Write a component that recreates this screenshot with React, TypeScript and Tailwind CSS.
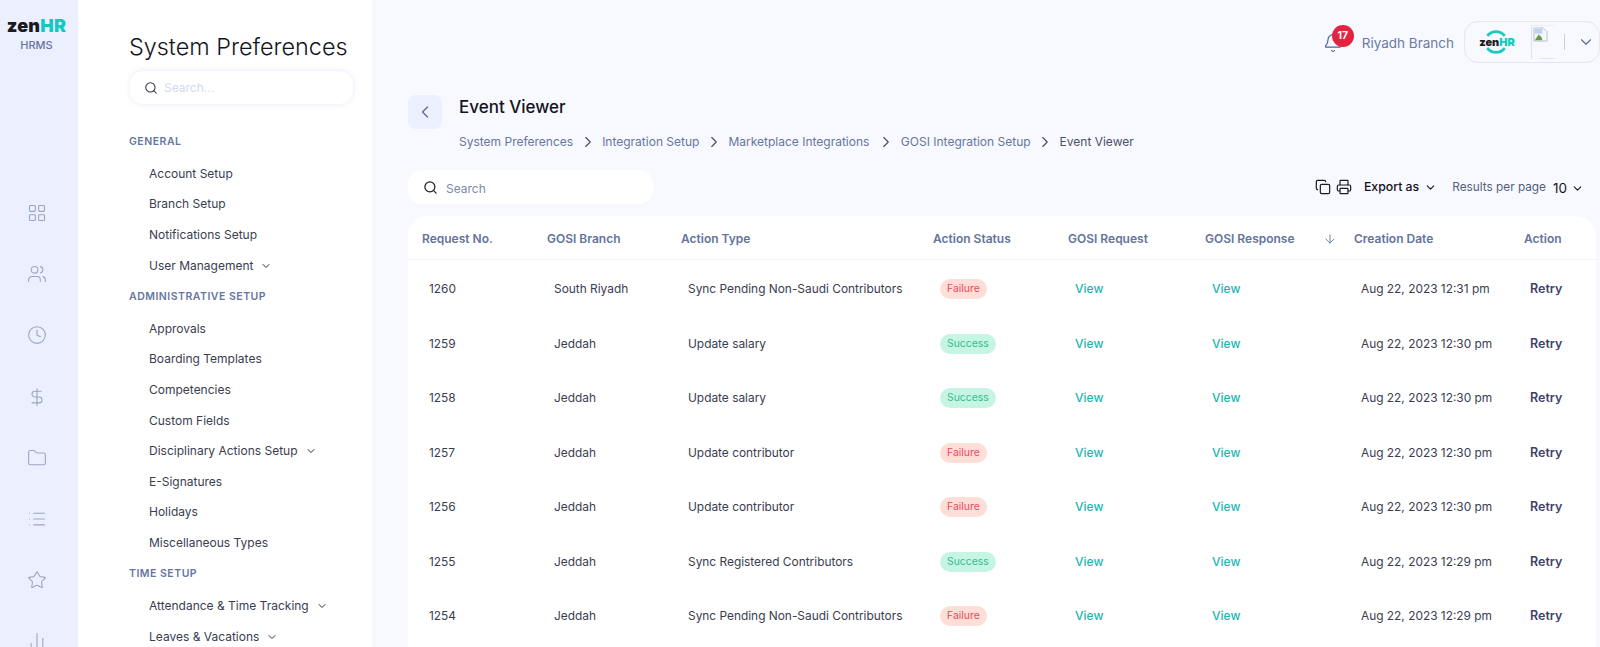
import { BarChart2, Bell, ChevronDown, ChevronLeft, ChevronRight, Clock, Copy, DollarSign, Folder, LayoutGrid, List, Printer, ArrowDown, Search, Star, Users } from "lucide-react";

const railIcons = [LayoutGrid, Users, Clock, DollarSign, Folder, List, Star, BarChart2];

const menu = [
  { title: "GENERAL", items: [["Account Setup"], ["Branch Setup"], ["Notifications Setup"], ["User Management", true]] },
  {
    title: "ADMINISTRATIVE SETUP",
    items: [
      ["Approvals"],
      ["Boarding Templates"],
      ["Competencies"],
      ["Custom Fields"],
      ["Disciplinary Actions Setup", true],
      ["E-Signatures"],
      ["Holidays"],
      ["Miscellaneous Types"],
    ],
  },
  { title: "TIME SETUP", items: [["Attendance & Time Tracking", true], ["Leaves & Vacations", true]] },
] as { title: string; items: [string, boolean?][] }[];

const crumbs = ["System Preferences", "Integration Setup", "Marketplace Integrations", "GOSI Integration Setup", "Event Viewer"];

const rows = [
  { no: 1260, branch: "South Riyadh", type: "Sync Pending Non-Saudi Contributors", ok: false, date: "Aug 22, 2023 12:31 pm" },
  { no: 1259, branch: "Jeddah", type: "Update salary", ok: true, date: "Aug 22, 2023 12:30 pm" },
  { no: 1258, branch: "Jeddah", type: "Update salary", ok: true, date: "Aug 22, 2023 12:30 pm" },
  { no: 1257, branch: "Jeddah", type: "Update contributor", ok: false, date: "Aug 22, 2023 12:30 pm" },
  { no: 1256, branch: "Jeddah", type: "Update contributor", ok: false, date: "Aug 22, 2023 12:30 pm" },
  { no: 1255, branch: "Jeddah", type: "Sync Registered Contributors", ok: true, date: "Aug 22, 2023 12:29 pm" },
  { no: 1254, branch: "Jeddah", type: "Sync Pending Non-Saudi Contributors", ok: false, date: "Aug 22, 2023 12:29 pm" },
];

const cols = "grid grid-cols-[125px_134px_252px_135px_137px_149px_170px_1fr] items-center pl-[14px]";

function Rail() {
  return (
    <aside className="w-[78px] shrink-0 bg-[#ecf0fe] pr-[5px] flex flex-col items-center">
      <div className="mt-[14px] text-[18px] leading-[24px] font-black tracking-[0.2px] text-[#1b1b1f]">
        zen<span className="text-[#14c9c0]">HR</span>
      </div>
      <div className="text-[11px] leading-[14px] font-medium text-[#66769f]">HRMS</div>
      <div className="mt-[151px] flex flex-col gap-[41.2px]">
        {railIcons.map((Icon, i) => (
          <Icon key={i} size={20} strokeWidth={1.3} className="text-[#98a5c5]" />
        ))}
      </div>
    </aside>
  );
}

function Sidebar() {
  return (
    <aside className="w-[294px] shrink-0 bg-white pl-[51px] pr-[18px]">
      <h1 className="mt-[29px] text-[23.4px] leading-[36px] font-light text-[#14141c] whitespace-nowrap">System Preferences</h1>
      <div className="mt-[5px] h-[35px] w-[225px] rounded-[14px] border border-[#f3f5fc] shadow-[0_0_4px_rgba(220,226,245,0.5)] flex items-center pl-[14px] gap-[6px]">
        <Search size={14} strokeWidth={1.8} className="text-[#33363f]" />
        <span className="text-[12px] text-[#d3daeb]">Search...</span>
      </div>
      <div className="mt-[21px]">
        {menu.map((group) => (
          <div key={group.title}>
            <div className="h-[31px] mb-[1.6px] flex items-center text-[10.5px] font-semibold tracking-[0.5px] text-[#66769f]">{group.title}</div>
            {group.items.map(([label, sub]) => (
              <div key={label} className="h-[30.6px] pl-[20px] flex items-center gap-[7px] text-[12px] text-[#3a3d50]">
                {label}
                {sub && <ChevronDown size={12} strokeWidth={2} className="text-[#2a2d40]" />}
              </div>
            ))}
          </div>
        ))}
      </div>
    </aside>
  );
}

function AccountBox() {
  return (
    <div className="h-[42px] w-[136px] rounded-[14px] border border-[#e2e6f5] flex items-center">
      <div className="relative ml-[12px] w-[40px] h-[30px] flex items-center justify-center">
        <svg viewBox="0 0 30 30" className="absolute left-[6px] top-[2px] w-[26px] h-[26px]" fill="none" stroke="#1ec9c0" strokeWidth="3.4">
          <path d="M5 8 A12.5 12.5 0 0 1 25 8" />
          <path d="M25 22 A12.5 12.5 0 0 1 5 22" />
        </svg>
        <span className="relative text-[11px] font-black text-[#1b1b1f] whitespace-nowrap">
          zen<span className="text-[#14c9c0]">HR</span>
        </span>
      </div>
      {/* broken avatar image */}
      <div className="ml-[14px] w-[33px] h-[34px] border-l border-[#dfe2ea] relative">
        <div className="absolute left-0 top-0 w-[23px] border-t border-[#eceef3]" />
        <div className="absolute left-[8px] bottom-0 w-[15px] border-b border-[#e2e4ea]" />
        <svg viewBox="0 0 16 16" className="absolute left-[1px] top-[2px] w-[15px] h-[15px]">
          <path d="M1 1h10l4 4v10H1z" fill="#f4f6fb" stroke="#b9bfcc" strokeWidth="1" />
          <path d="M2 14l4-6 3 3 1 3z" fill="#5f9e45" />
          <path d="M2 2h8v5H2z" fill="#bcd3f3" />
        </svg>
      </div>
      <div className="h-[16px] border-l border-[#c9cfdc]" />
      <ChevronDown size={18} strokeWidth={1.5} className="ml-[12px] text-[#5a6a92]" />
    </div>
  );
}

function Table() {
  return (
    <div className="mt-[12px] mr-[4px] pb-[20px] rounded-t-[20px] bg-white">
      <div className={`${cols} h-[44px] pt-[3px] border-b border-[#f2f4fb] text-[12px] font-semibold text-[#64739b]`}>
        <div>Request No.</div>
        <div>GOSI Branch</div>
        <div>Action Type</div>
        <div>Action Status</div>
        <div>GOSI Request</div>
        <div className="flex items-center">
          GOSI Response
          <ArrowDown size={14} strokeWidth={1.5} className="ml-[28px]" />
        </div>
        <div>Creation Date</div>
        <div>Action</div>
      </div>
      <div className="pt-[2px]">
        {rows.map((r) => (
          <div key={r.no} className={`${cols} h-[54.5px] text-[11.9px] text-[#3a3d50]`}>
            <div className="pl-[7px]">{r.no}</div>
            <div className="pl-[7px]">{r.branch}</div>
            <div className="pl-[7px] whitespace-nowrap">{r.type}</div>
            <div className="pl-[7px]">
              {r.ok ? (
                <span className="inline-flex h-[20px] items-center rounded-full bg-[#c7f5e4] px-[7px] text-[10.4px] text-[#33bd8d]">Success</span>
              ) : (
                <span className="inline-flex h-[20px] items-center rounded-full bg-[#ffded7] px-[7px] text-[10.4px] text-[#e8495f]">Failure</span>
              )}
            </div>
            <div className="pl-[7px] text-[12px] font-medium text-[#1db6b2]">View</div>
            <div className="pl-[7px] text-[12px] font-medium text-[#1db6b2]">View</div>
            <div className="pl-[7px] whitespace-nowrap">{r.date}</div>
            <div className="pl-[6px] text-[12.5px] font-semibold leading-[16px] text-[#3f4169]">Retry</div>
          </div>
        ))}
      </div>
    </div>
  );
}

function Main() {
  return (
    <main className="flex-1 min-w-0 pl-[36px]">
      <div className="h-[84px] pt-[21px] flex items-start justify-end">
        <div className="h-[42px] flex items-center">
          <div className="relative mr-[19px] mt-[2px]">
            <Bell size={20} strokeWidth={1.4} className="text-[#4a6296]" />
            <span className="absolute left-[9px] top-[-8px] w-[22px] h-[22px] rounded-full bg-[#e3233f] text-white text-[10.5px] font-bold flex items-center justify-center">17</span>
          </div>
          <span className="mr-[10px] mt-[2px] text-[13.5px] text-[#6b7ba3]">Riyadh Branch</span>
          <AccountBox />
        </div>
      </div>

      <div className="mt-[11px] flex">
        <div className="w-[34px] h-[34px] rounded-[8px] bg-[#ecf0fe] flex items-center justify-center">
          <ChevronLeft size={20} strokeWidth={1.5} className="text-[#5a6a92]" />
        </div>
        <div className="ml-[17px]">
          <div className="mt-[2px] h-[22px] flex items-center text-[17px] font-medium text-[#14141c]">Event Viewer</div>
          <div className="mt-[12px] h-[22px] flex items-center text-[12px] text-[#66769f]">
            {crumbs.map((c, i) => (
              <span key={c} className="flex items-center">
                {i > 0 && <ChevronRight size={18} strokeWidth={1.5} className={i === 3 ? "ml-[8px] mr-[5.5px] text-[#444b66]" : "mx-[5.5px] text-[#444b66]"} />}
                <span className={i === 4 ? "text-[#4a4f68]" : ""}>{c}</span>
              </span>
            ))}
          </div>
        </div>
      </div>

      <div className="mt-[17px] flex items-center justify-between pr-[16px]">
        <div className="h-[34px] w-[245px] rounded-[14px] bg-white flex items-center pl-[15px] gap-[8px]">
          <Search size={15} strokeWidth={2} className="text-[#1c1c24]" />
          <span className="pt-[3px] text-[12px] text-[#7b89ad]">Search</span>
        </div>
        <div className="flex items-center">
          <Copy size={16} strokeWidth={1.8} className="text-[#1c1c24]" />
          <Printer size={16} strokeWidth={1.8} className="ml-[5px] text-[#1c1c24]" />
          <span className="ml-[12px] pt-[1px] text-[12.3px] font-medium text-[#14141c]">Export as</span>
          <ChevronDown size={13} strokeWidth={2} className="ml-[5px] text-[#14141c]" />
          <span className="ml-[15px] pt-[1px] text-[11.8px] text-[#555f7a]">Results per page</span>
          <span className="ml-[7px] mt-[2px] text-[13.5px] text-[#14141c]">10</span>
          <ChevronDown size={13} strokeWidth={2} className="ml-[4px] mt-[2px] text-[#14141c]" />
        </div>
      </div>

      <Table />
    </main>
  );
}

export default function App() {
  return (
    <div className="w-[1600px] h-[647px] overflow-hidden flex bg-[#f8f9fe] font-['Inter',sans-serif]">
      <Rail />
      <Sidebar />
      <Main />
    </div>
  );
}
